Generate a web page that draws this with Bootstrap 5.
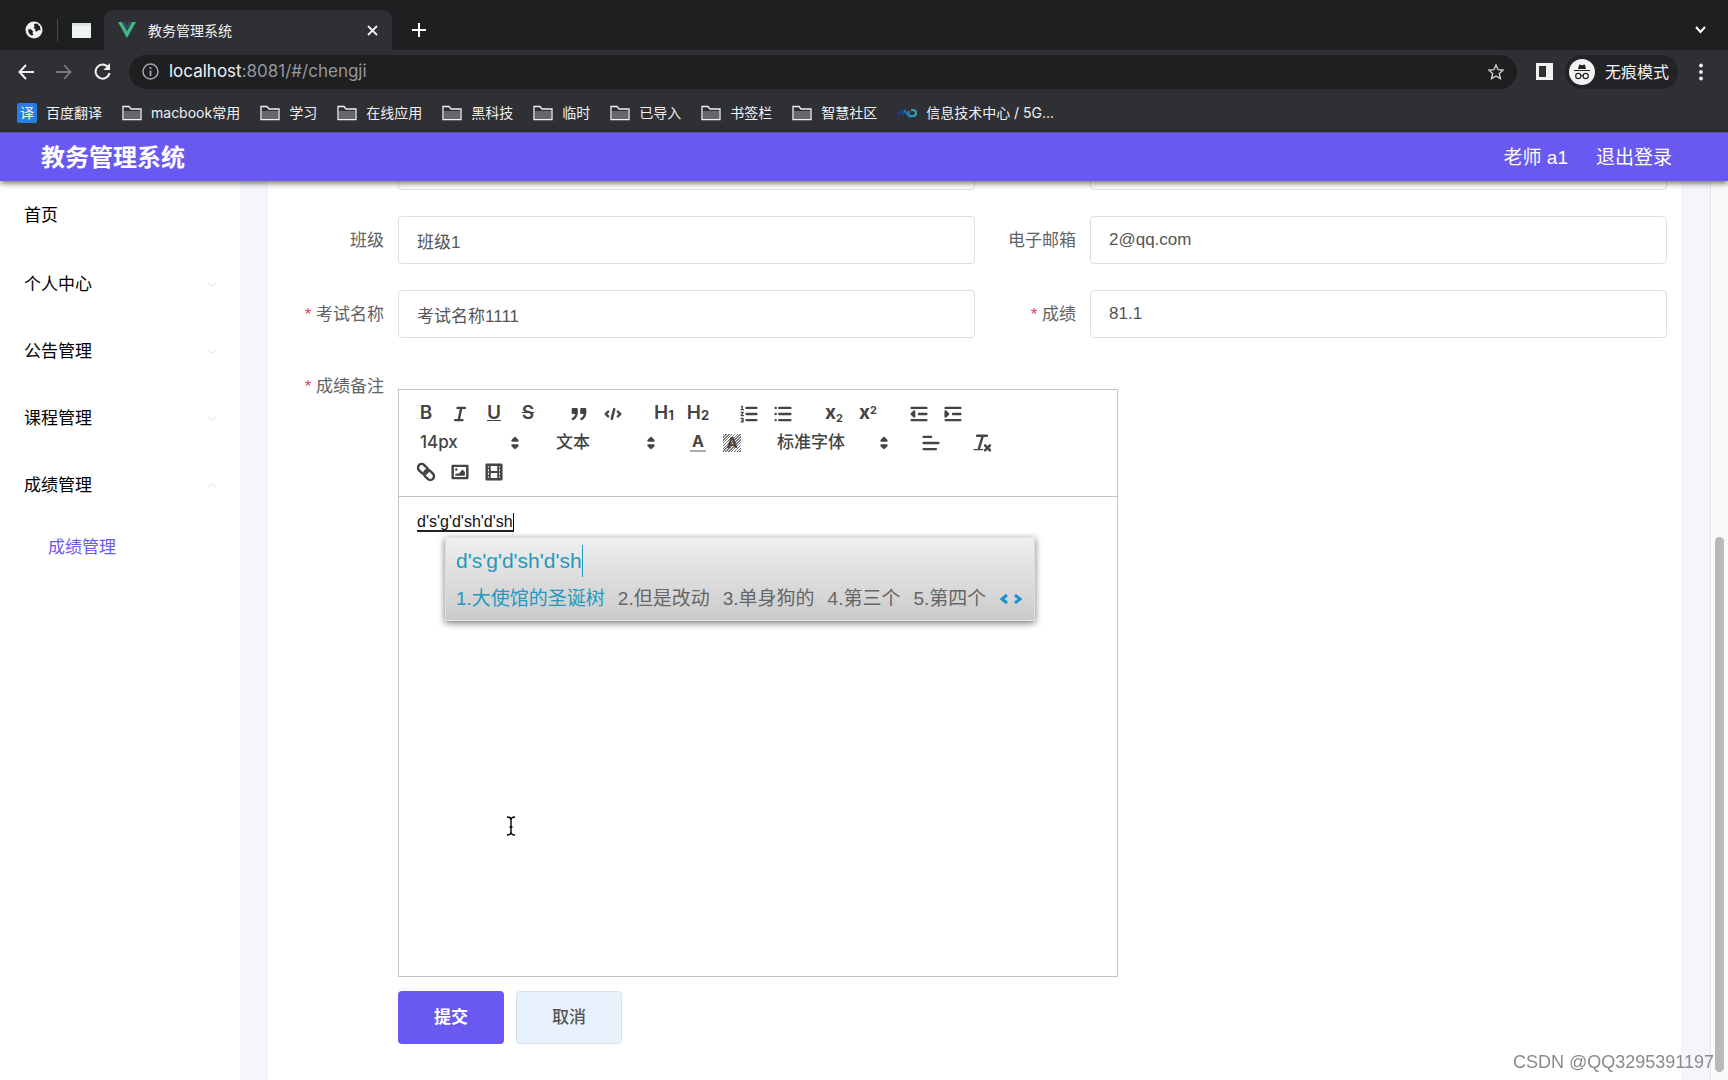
<!DOCTYPE html>
<html lang="zh-CN">
<head>
<meta charset="utf-8">
<meta name="viewport" content="width=device-width, initial-scale=1">
<title>教务管理系统</title>
<link href="https://cdn.jsdelivr.net/npm/bootstrap@5.3.0/dist/css/bootstrap.min.css" rel="stylesheet">
<style>
  :root { --brand: #6959f0; --ink: #444; }
  body { font-family: "Liberation Sans", "Noto Sans CJK SC", sans-serif; font-size: 17px; background: #fff; }
  a { text-decoration: none; color: inherit; }
  svg { display: block; flex: none; }
  button { color: inherit; }
  .plain-btn { border: 0; background: none; padding: 0; display: flex; align-items: center; justify-content: center; }

  /* browser frame */
  .chrome { font-family: Inter, "Noto Sans CJK SC", sans-serif; font-size: 14px; color: #f1f1f3; background: #2f3034; }
  .tab-strip { height: 50px; background: #1e1f21; padding: 10px 18px 0 25px; }
  .tab-strip .pin { height: 40px; gap: 14px; }
  .divider { width: 1px; height: 22px; background: #4a4b4f; }
  .live-tab { width: 288px; height: 40px; margin-left: 13px; background: #2f3034; border-radius: 9px 9px 0 0; padding: 0 14px; }
  .tool-row { height: 43px; padding: 0 25px 0 18px; }
  .nav-btns { gap: 22px; margin-right: 18px; }
  .omnibox { height: 34px; border-radius: 17px; background: #1e1f21; padding: 0 13px; font-size: 17px; }
  .omnibox .url { padding-left: 10px; }
  .url-rest { color: #96979b; }
  .panel-ico { margin: 0 12px 0 19px; }
  .incog { height: 34px; border-radius: 17px; background: #222326; padding: 0 9px 0 4px; font-size: 16px; gap: 10px; margin-right: 21px; }
  .marks { height: 39px; padding: 0 17px; gap: 20px; }
  .marks a { gap: 9px; }
  .fy { width: 20px; height: 20px; background: #2a7de1; border-radius: 2px; font-size: 14px; line-height: 20px; text-align: center; }

  /* application header */
  .app-head { height: 49px; background: var(--brand); color: #fff; padding: 2px 56px 0 41px; border-top: 1px solid #5c53a6; box-shadow: 0 2px 6px rgba(0,0,0,.6); z-index: 3; font-size: 19px; }
  .app-title { font-size: 24px; font-weight: 700; }

  .side { width: 240px; color: #000; z-index: 1; background: #fff; }
  .side a { height: 67px; padding: 0 23px 0 24px; }
  .side a.home { height: 70px; }
  .side a.sub { height: 58px; padding-left: 48px; color: var(--brand); }
  .stage { background: #f5f6fb; padding: 0 29px 0 28px; }
  .sheet { background: #fff; padding: 0 14px 0 15px; overflow: hidden; }
  .above { margin-top: -39px; }
  .field { margin-bottom: 26px; }
  .field label, .note-label { width: 115px; padding-right: 14px; text-align: right; color: #606266; line-height: 50px; height: 48px; flex: none; }
  .note-label { line-height: 46px; }
  .req::before { content: "* "; color: #e0445f; }
  .field .form-control { height: 48px; font-size: 17px; padding: 0 18px; color: #555; border: 1px solid #dcdfe6; border-radius: 4px; }

  .editor { width: 720px; margin-top: 25px; border: 1px solid #c4c4c4; }
  .tools { padding: 9px 9px 10px 10px; border-bottom: 1px solid #c4c4c4; color: var(--ink); }
  .grp { margin-right: 17px; }
  .grp button, .grp .pick { height: 29px; }
  .grp button { width: 34px; font-weight: 700; font-family: Inter, sans-serif; font-size: 19px; }
  .grp button svg, .pick svg { width: 22px; height: 22px; stroke: var(--ink); fill: none; stroke-width: 2; stroke-linecap: round; stroke-linejoin: round; }
  .semi button { font-weight: 600; }
  .grp sub, .grp sup { font-size: 11px; }
  .low { font-size: 13px; font-weight: 700; align-self: center; padding-top: 4px; }
  .pick { width: 119px; position: relative; }
  .pick.wide { width: 131px; }
  .pick select { appearance: none; border: 0; background: none; width: 100%; height: 29px; padding: 0 0 0 11px; font-size: 17px; font-weight: 500; color: var(--ink); outline: 0; font-family: Inter, "Noto Sans CJK SC", sans-serif; }
  .pick svg { position: absolute; right: 2px; top: 4px; pointer-events: none; }
  .grp svg .solid { fill: var(--ink); }
  .grp svg .thin { stroke-width: 1; }
  .ink-a { border-bottom: 2px solid #aaa; line-height: 17px; padding: 0 2px; font-size: 16px; }
  .hatch { background: repeating-linear-gradient(135deg, #777 0 1px, #fff 1px 2px); line-height: 18px; padding: 0 3px; font-size: 15px; }
  .paper { height: 479px; padding: 14px 18px; color: #111; font-size: 16px; line-height: 22px; outline: 0; }
  .typed { border-bottom: 2px solid #222; border-right: 1px solid #000; display: inline-block; line-height: 17px; }

  .ime { position: absolute; left: 46px; top: 40px; width: 590px; height: 84px; padding: 7px 10px; background: linear-gradient(#efefef, #cbcbcb); border: 1px solid #e2e2e2; box-shadow: 0 2px 7px rgba(0,0,0,.55); font-size: 19px; color: #666; z-index: 2; }
  .ime-line { font-size: 21px; line-height: 32px; color: #2499bd; }
  .ime-line span { display: inline-block; border-right: 1px solid #2499bd; }
  .ime-list { gap: 13px; line-height: 44px; white-space: nowrap; }
  .ime-list .on { color: #2499bd; }
  .ibeam { position: absolute; left: 107px; top: 319px; }

  .acts { margin: 14px 0 36px 115px; gap: 12px; }
  .acts .btn { width: 106px; height: 53px; font-size: 17px; border-radius: 4px; padding: 0; }
  .btn-go, .btn-go:hover { background: var(--brand); color: #fff; font-weight: 700; }
  .btn-off, .btn-off:hover { background: #e8f2fc; border: 1px solid #d9dfe8; color: #555; font-weight: 500; }

  .rail { width: 18px; background: #fafafa; border-left: 1px solid #e4e5ec; padding: 356px 4px 8px; }
  .thumb { width: 9px; border-radius: 5px; background: #b9b9b9; }
  .stamp { position: fixed; right: 14px; bottom: 7px; font-size: 18px; line-height: 22px; color: #8a8a8a; z-index: 5; }
</style>
</head>
<body class="vh-100 d-flex flex-column overflow-hidden">

<svg width="0" height="0" class="position-absolute" aria-hidden="true">
  <symbol id="folder" viewBox="0 0 20 16"><path d="M1 14.500V1.500h6l2 2.500h10v10.500z" fill="none" stroke="#f0f0f0" stroke-width="1.300"/><path d="M2 6h16v8H2z" fill="#66676b"/></symbol>
  <symbol id="updown" viewBox="0 0 18 18"><polygon points="7 11 9 13 11 11 7 11" fill="#444"/><polygon points="7 7 9 5 11 7 7 7" fill="#444"/></symbol>
  <symbol id="chev" viewBox="0 0 12 8"><path d="M1 1.500l5 5 5-5" fill="none" stroke="#d4d4d8" stroke-width="1"/></symbol>
</svg>

<div class="chrome flex-shrink-0">
  <div class="tab-strip d-flex">
    <div class="pin d-flex align-items-center">
      <svg width="18" height="18" viewBox="0 0 18 18"><circle cx="9" cy="9" r="8.500" fill="#f1f1f1"/><path d="M3.500 8l3 .5 1.500 2-.5 1.500 1 2-2 .5C4 13 2.500 11 3.500 8zM9 3l3-.5 3 3 .5 4-2-.5-1.500 1.500-2-.5.5-2-2-1 1-1.500z" fill="#1e1f21"/></svg>
      <span class="divider"></span>
      <svg width="19" height="15" viewBox="0 0 19 15"><path d="M0 0h19v15H0z" fill="#eef3f0"/><path d="M0 0h19v3H0z" fill="#d6e2dc"/></svg>
    </div>
    <div class="live-tab d-flex align-items-center">
      <svg width="18" height="16" viewBox="0 0 18 16"><path d="M0 0h4l5 9 5-9h4L9 16z" fill="#41b883"/><path d="M4 0h3l2 3.500L11 0h3L9 9z" fill="#35495e"/></svg>
      <span class="flex-grow-1 ms-2 ps-1">教务管理系统</span>
      <button class="plain-btn" aria-label="关闭标签页"><svg width="11" height="11" viewBox="0 0 11 11" stroke="#f1f1f1" stroke-width="1.800"><path d="M1 1l9 9M10 1l-9 9"/></svg></button>
    </div>
    <div class="pin d-flex align-items-center flex-grow-1 justify-content-between">
      <button class="plain-btn ms-3 ps-1" aria-label="新标签页"><svg width="14" height="14" viewBox="0 0 14 14" stroke="#fff" stroke-width="2"><path d="M7 0v14M0 7h14"/></svg></button>
      <button class="plain-btn pe-1" aria-label="搜索标签页"><svg width="11" height="8" viewBox="0 0 11 8" fill="none" stroke="#fff" stroke-width="2"><path d="M1 1l4.500 5L10 1"/></svg></button>
    </div>
  </div>
  <div class="tool-row d-flex align-items-center">
    <div class="nav-btns d-flex align-items-center">
      <button class="plain-btn" aria-label="后退"><svg width="16" height="16" viewBox="0 0 16 16" fill="none" stroke="#f1f1f1" stroke-width="2"><path d="M16 8H1.500M8 1L1.500 8 8 15"/></svg></button>
      <button class="plain-btn" aria-label="前进"><svg width="16" height="16" viewBox="0 0 16 16" fill="none" stroke="#7a7b7f" stroke-width="1.800"><path d="M0 8h14.500M8 1l6.500 7L8 15"/></svg></button>
      <button class="plain-btn" aria-label="刷新"><svg width="17" height="17" viewBox="0 0 17 17" fill="none" stroke="#f1f1f1" stroke-width="2"><path d="M14.300 4.500A7 7 0 1 0 15.500 10"/><path d="M16 0v7H9.500z" fill="#f1f1f1" stroke="none"/></svg></button>
    </div>
    <div class="omnibox d-flex align-items-center flex-grow-1">
      <svg width="17" height="17" viewBox="0 0 17 17" fill="none" stroke="#a4a5a9" stroke-width="1.500"><circle cx="8.500" cy="8.500" r="7.500"/><path d="M8.500 7.500V13M8.500 4v2" stroke-width="1.800"/></svg>
      <span class="url flex-grow-1">localhost<span class="url-rest">:8081/#/chengji</span></span>
      <svg width="16" height="16" viewBox="0 0 16 16" fill="none" stroke="#d0d1d4" stroke-width="1.400"><path d="M8 1l2.100 4.700 5 .5-3.800 3.400 1.100 5L8 12l-4.400 2.600 1.100-5L.9 6.200l5-.5z"/></svg>
    </div>
    <svg width="17" height="17" viewBox="0 0 17 17" class="panel-ico"><path d="M0 0h17v17H0zM3 3v11h7V3z" fill="#f1f1f1" fill-rule="evenodd"/></svg>
    <div class="incog d-flex align-items-center">
      <svg width="26" height="26" viewBox="0 0 26 26"><circle cx="13" cy="13" r="13" fill="#f3f3f4"/><path d="M9 10l1.200-4.500 2.800.8 2.800-.8L17 10zM5 11h16v1H5z" fill="#222326"/><g fill="none" stroke="#222326" stroke-width="1.200"><circle cx="9.300" cy="17" r="2.600"/><circle cx="16.700" cy="17" r="2.600"/><path d="M12 16.500h2"/></g></svg>
      <span>无痕模式</span>
    </div>
    <button class="plain-btn" aria-label="菜单"><svg width="4" height="18" viewBox="0 0 4 18" fill="#f1f1f1"><circle cx="2" cy="2.500" r="1.900"/><circle cx="2" cy="9" r="1.900"/><circle cx="2" cy="15.500" r="1.900"/></svg></button>
  </div>
  <nav class="marks d-flex align-items-center">
    <a href="#" class="d-flex align-items-center"><span class="fy">译</span>百度翻译</a>
    <a href="#" class="d-flex align-items-center"><svg width="20" height="16"><use href="#folder"/></svg>macbook常用</a>
    <a href="#" class="d-flex align-items-center"><svg width="20" height="16"><use href="#folder"/></svg>学习</a>
    <a href="#" class="d-flex align-items-center"><svg width="20" height="16"><use href="#folder"/></svg>在线应用</a>
    <a href="#" class="d-flex align-items-center"><svg width="20" height="16"><use href="#folder"/></svg>黑科技</a>
    <a href="#" class="d-flex align-items-center"><svg width="20" height="16"><use href="#folder"/></svg>临时</a>
    <a href="#" class="d-flex align-items-center"><svg width="20" height="16"><use href="#folder"/></svg>已导入</a>
    <a href="#" class="d-flex align-items-center"><svg width="20" height="16"><use href="#folder"/></svg>书签栏</a>
    <a href="#" class="d-flex align-items-center"><svg width="20" height="16"><use href="#folder"/></svg>智慧社区</a>
    <a href="#" class="d-flex align-items-center"><svg width="20" height="12" viewBox="0 0 20 12" fill="none" stroke-width="2.200"><path d="M1 8l3-4 3 4" stroke="#17468c"/><path d="M7 3l5 6V4" stroke="#2277b0"/><path d="M14 3h2a3 3 0 0 1 0 6h-3" stroke="#2f9fb5"/></svg>信息技术中心 / 5G...</a>
  </nav>
</div>

<header class="app-head d-flex align-items-center justify-content-between flex-shrink-0 position-relative">
  <span class="app-title">教务管理系统</span>
  <div class="d-flex"><span class="me-4 pe-1">老师 a1</span><a href="#">退出登录</a></div>
</header>

<div class="d-flex flex-grow-1 overflow-hidden">
  <nav class="side flex-shrink-0">
    <a href="#" class="home d-flex align-items-center">首页</a>
    <a href="#" class="d-flex align-items-center justify-content-between">个人中心<svg width="10" height="7"><use href="#chev"/></svg></a>
    <a href="#" class="d-flex align-items-center justify-content-between">公告管理<svg width="10" height="7"><use href="#chev"/></svg></a>
    <a href="#" class="d-flex align-items-center justify-content-between">课程管理<svg width="10" height="7"><use href="#chev"/></svg></a>
    <a href="#" class="d-flex align-items-center justify-content-between">成绩管理<svg width="10" height="7" viewBox="0 0 12 8"><path d="M1 6.500l5-5 5 5" fill="none" stroke="#d4d4d8"/></svg></a>
    <a href="#" class="sub d-flex align-items-center">成绩管理</a>
  </nav>

  <main class="stage flex-grow-1 overflow-hidden">
    <form class="sheet h-100">
      <div class="row g-0 above">
        <div class="col-6 field d-flex"><label for="f1"></label><input id="f1" class="form-control" aria-label="姓名"></div>
        <div class="col-6 field d-flex"><label for="f2"></label><input id="f2" class="form-control" aria-label="电话"></div>
        <div class="col-6 field d-flex"><label for="f3">班级</label><input id="f3" class="form-control" value="班级1"></div>
        <div class="col-6 field d-flex"><label for="f4">电子邮箱</label><input id="f4" class="form-control" value="2@qq.com"></div>
        <div class="col-6 field d-flex"><label for="f5" class="req">考试名称</label><input id="f5" class="form-control" value="考试名称1111"></div>
        <div class="col-6 field d-flex"><label for="f6" class="req">成绩</label><input id="f6" class="form-control" value="81.1"></div>
      </div>
      <div class="d-flex">
        <span class="note-label req" id="note">成绩备注</span>
        <div class="editor">
          <div class="tools d-flex flex-wrap">
            <div class="grp semi d-flex">
              <button type="button" class="plain-btn">B</button>
              <button type="button" class="plain-btn" aria-label="斜体"><svg viewBox="0 0 18 18"><line x1="7" x2="13" y1="4" y2="4"/><line x1="5" x2="11" y1="14" y2="14"/><line x1="8" x2="10" y1="14" y2="4"/></svg></button>
              <button type="button" class="plain-btn"><u>U</u></button>
              <button type="button" class="plain-btn"><s>S</s></button>
            </div>
            <div class="grp d-flex">
              <button type="button" class="plain-btn" aria-label="引用"><svg viewBox="0 0 18 18"><g class="solid"><rect height="3" width="3" x="4" y="5"/><rect height="3" width="3" x="11" y="5"/><path d="M7,8c0,4.031-3,5-3,5M14,8c0,4.031-3,5-3,5"/></g></svg></button>
              <button type="button" class="plain-btn" aria-label="代码"><svg viewBox="0 0 18 18"><polyline points="5 7 3 9 5 11"/><polyline points="13 7 15 9 13 11"/><line x1="10" x2="8" y1="5" y2="13"/></svg></button>
            </div>
            <div class="grp semi d-flex">
              <button type="button" class="plain-btn">H<span class="low">1</span></button>
              <button type="button" class="plain-btn">H<span class="low">2</span></button>
            </div>
            <div class="grp d-flex">
              <button type="button" class="plain-btn" aria-label="有序列表"><svg viewBox="0 0 18 18"><path d="M7 4h8M7 9h8M7 14h8"/><g class="thin"><path d="M2.500 5.500h2M3.500 5.500v-3L2.700 3M2.500 7.700h1.800L2.500 10.300h2M2.500 12.500h1.700v3H2.500M3 14h1"/></g></svg></button>
              <button type="button" class="plain-btn" aria-label="无序列表"><svg viewBox="0 0 18 18"><path d="M6 4h9M6 9h9M6 14h9M3 4h0M3 9h0M3 14h0"/></svg></button>
            </div>
            <div class="grp d-flex">
              <button type="button" class="plain-btn"><span>x<sub>2</sub></span></button>
              <button type="button" class="plain-btn"><span>x<sup>2</sup></span></button>
            </div>
            <div class="grp d-flex">
              <button type="button" class="plain-btn" aria-label="减少缩进"><svg viewBox="0 0 18 18"><path d="M3 14h12M3 4h12M9 9h6"/><polyline class="solid" points="5 7 5 11 3 9 5 7"/></svg></button>
              <button type="button" class="plain-btn" aria-label="增加缩进"><svg viewBox="0 0 18 18"><path d="M3 14h12M3 4h12M9 9h6"/><polyline class="solid" points="3 7 3 11 5 9 3 7"/></svg></button>
            </div>
            <div class="grp"><div class="pick"><select aria-label="字号"><option>14px</option></select><svg><use href="#updown"/></svg></div></div>
            <div class="grp"><div class="pick"><select aria-label="标题"><option>文本</option></select><svg><use href="#updown"/></svg></div></div>
            <div class="grp d-flex">
              <button type="button" class="plain-btn"><span class="ink-a">A</span></button>
              <button type="button" class="plain-btn"><span class="hatch">A</span></button>
            </div>
            <div class="grp"><div class="pick wide"><select aria-label="字体"><option>标准字体</option></select><svg><use href="#updown"/></svg></div></div>
            <div class="grp"><button type="button" class="plain-btn" aria-label="对齐"><svg viewBox="0 0 18 18"><path d="M3 9h12M3 14h10M3 4h6"/></svg></button></div>
            <div class="grp"><button type="button" class="plain-btn" aria-label="清除格式"><svg viewBox="0 0 18 18"><path d="M5 3h8M6.500 13.500L9.500 3.500M11.500 11l4 4M15.500 11l-4 4"/><path d="M2.500 14.500h7" class="thin"/></svg></button></div>
            <div class="grp d-flex">
              <button type="button" class="plain-btn" aria-label="链接"><svg viewBox="0 0 18 18"><g transform="rotate(45 9 9)"><rect x="1" y="6" width="9" height="6" rx="3"/><rect x="8" y="6" width="9" height="6" rx="3"/></g></svg></button>
              <button type="button" class="plain-btn" aria-label="图片"><svg viewBox="0 0 18 18"><rect height="10" width="12" x="3" y="4"/><circle cx="6" cy="7" r="1" fill="#444" stroke="none"/><path d="M5 12v-1l2-1 1 .5L11 7l2 2v3z" fill="#444" stroke="none"/></svg></button>
              <button type="button" class="plain-btn" aria-label="视频"><svg viewBox="0 0 18 18"><rect height="12" width="12" x="3" y="3"/><path d="M5.500 3v12M12.500 3v12M5.500 9h7" stroke-width="1.600"/><path d="M3.500 6h2M3.500 9h2M3.500 12h2M12.500 6h2M12.500 9h2M12.500 12h2" class="thin"/></svg></button>
            </div>
          </div>
          <div class="position-relative">
            <div class="paper" contenteditable="true" role="textbox" aria-labelledby="note" spellcheck="false"><span class="typed">d's'g'd'sh'd'sh</span></div>
            <div class="ime">
              <div class="ime-line"><span>d's'g'd'sh'd'sh</span></div>
              <div class="ime-list d-flex align-items-center"><span class="on">1.大使馆的圣诞树</span><span>2.但是改动</span><span>3.单身狗的</span><span>4.第三个</span><span>5.第四个</span>
                <svg width="24" height="12" viewBox="0 0 24 12" fill="none" stroke="#2090cc" stroke-width="3"><path d="M8 2L3 6l5 4M16 2l5 4-5 4"/></svg></div>
            </div>
            <svg class="ibeam" width="10" height="20" viewBox="0 0 10 20" fill="none" stroke="#000" stroke-width="1.400"><path d="M1 1q4 0 4 3v12q0 3-4 3M9 1q-4 0-4 3M5 16q0 3 4 3M3.500 11h3"/></svg>
          </div>
        </div>
      </div>
      <div class="acts d-flex">
        <button type="button" class="btn btn-go">提交</button>
        <button type="button" class="btn btn-off">取消</button>
      </div>
    </form>
  </main>
  <div class="rail d-flex flex-shrink-0"><div class="thumb"></div></div>
</div>
<div class="stamp">CSDN @QQ3295391197</div>
<script src="https://cdn.jsdelivr.net/npm/bootstrap@5.3.0/dist/js/bootstrap.bundle.min.js"></script>
</body>
</html>
